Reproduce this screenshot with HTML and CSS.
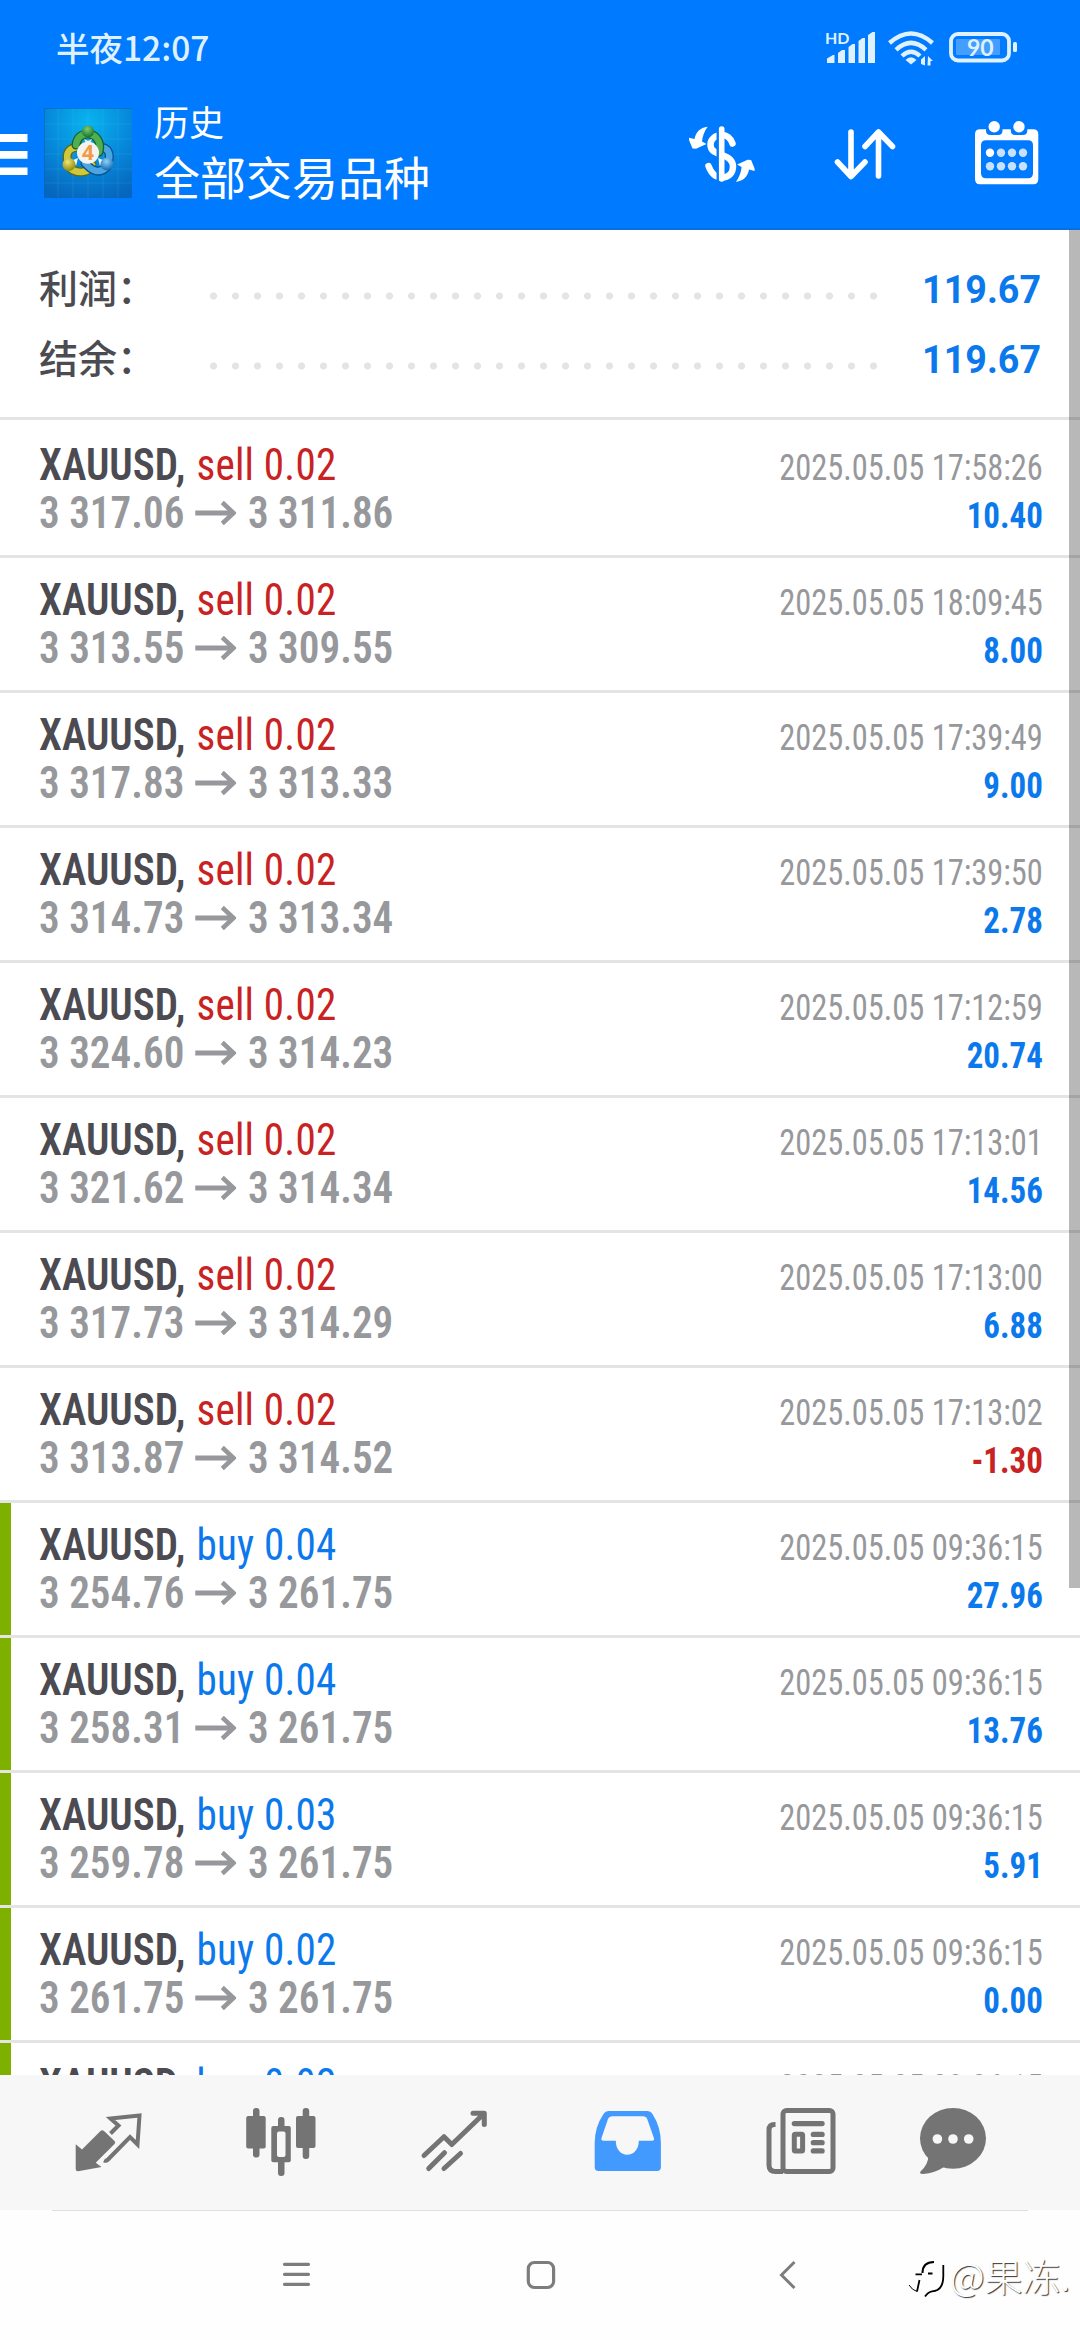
FILE: index.html
```
<!DOCTYPE html>
<html lang="zh-CN"><head><meta charset="utf-8"><title>历史</title><link rel="stylesheet" href="styles.css"></head>
<body>
<header class="header">
  <div class="status">
    <span class="clock">半夜12:07</span>
    <svg class="status-icons" viewBox="820 20 210 56" width="210" height="56">
      <g fill="#dff1ff">
        <text x="825" y="43.500" class="hd">HD</text>
        <path d="M827 63V58.500L833 55H834.500V63ZM838 63V53L842 50H845V63ZM848.500 63V47L852.500 44H855V63ZM858.500 63V41L862.500 38H865V63ZM868 63V35L872.500 32H875V63Z"/>
        <path d="M905.500 60Q911 54.500 916.500 60L911 64.500Z"/>
        <path d="M921 64V59.500L925 56V65.500ZM928 56L933 61H930.500V65.500H927.500Z"/>
        <rect x="1013" y="42" width="4" height="10" rx="1.500"/>
        <rect x="956" y="39" width="44" height="16" rx="1" opacity=".3"/>
        <text x="967" y="56" class="batt">90</text>
      </g>
      <g fill="none" stroke="#dff1ff" stroke-width="4.400">
        <path d="M889.500 43Q911 24 932.500 43"/>
        <path d="M896 49.800Q911 36 926 49.800"/>
        <path d="M902 56Q911 47.500 920 56"/>
        <rect x="951" y="34" width="58" height="26.500" rx="7" stroke-width="3.800"/>
      </g>
    </svg>
  </div>
  <div class="appbar">
    <svg class="burger" viewBox="0 134 28 42" width="28" height="42"><path fill="#fff" d="M0 134H27.500V142H0ZM0 151H27.500V158.700H0ZM0 167.500H27.500V175H0Z"/></svg>
    <svg class="logo" viewBox="44 108 88 90" width="88" height="90">
      <defs>
        <radialGradient id="bg" cx=".5" cy=".15" r=".9"><stop offset="0" stop-color="#08b4ee"/><stop offset=".5" stop-color="#068bdc"/><stop offset="1" stop-color="#0666bd"/></radialGradient>
        <radialGradient id="gn" cx=".45" cy=".3" r=".7"><stop offset="0" stop-color="#7fce70"/><stop offset="1" stop-color="#14702b"/></radialGradient>
        <radialGradient id="yl" cx=".4" cy=".3" r=".7"><stop offset="0" stop-color="#f0e870"/><stop offset="1" stop-color="#8f8a12"/></radialGradient>
        <radialGradient id="bl" cx=".45" cy=".3" r=".7"><stop offset="0" stop-color="#8fd2f5"/><stop offset="1" stop-color="#1268b4"/></radialGradient>
      </defs>
      <rect x="44" y="108" width="88" height="90" fill="url(#bg)"/>
      <path d="M58 108V198M73 108V198M88 108V198M103 108V198M118 108V198M44 124H132M44 139H132M44 154H132M44 169H132M44 183H132" stroke="#6fd0ff" stroke-opacity=".14" fill="none"/>
      <path d="M44.500 198V108.500H132" fill="none" stroke="#0560b5" stroke-opacity=".6"/>
      <g fill="none" stroke-linecap="round">
        <path d="M68 162C65 152 70 147 80 147M70 168C78 175 90 172 92 165" stroke="#5c6a12" stroke-width="9"/>
        <path d="M68 162C65 152 70 147 80 147M70 168C78 175 90 172 92 165" stroke="#cfc83c" stroke-width="6.500"/>
        <path d="M99 147C109 147 111 155 108 163M107 167C99 175 91 170 85 163" stroke="#084f92" stroke-width="9"/>
        <path d="M99 147C109 147 111 155 108 163M107 167C99 175 91 170 85 163" stroke="#4aa6e0" stroke-width="6.500"/>
        <path d="M76 145C77 137 82 134 88 134C95 134 102 141 99 152" stroke="#14602a" stroke-width="9"/>
        <path d="M76 145C77 137 82 134 88 134C95 134 102 141 99 152" stroke="#4fae4f" stroke-width="6.500"/>
      </g>
      <path d="M84 139L88 141L92 139L90 143H86ZM73 160L78 158L76 166ZM103 160L98 158L100 166Z" fill="#f4f8e8"/>
      <circle cx="88" cy="131.500" r="6" fill="url(#gn)"/>
      <circle cx="69" cy="164.500" r="6.500" fill="url(#yl)"/>
      <circle cx="107" cy="164" r="6.500" fill="url(#bl)"/>
      <circle cx="88" cy="152.700" r="11" fill="#f4f3f0"/>
      <text x="88" y="160" class="four">4</text>
    </svg>
    <div class="titles"><div class="title-small">历史</div><div class="title-big">全部交易品种</div></div>
    <svg class="actions" viewBox="680 110 370 85" width="370" height="85">
      <g fill="none" stroke="#fff" stroke-linecap="round" stroke-linejoin="round">
        <path d="M732.500 142.500C730 136 727 134 722 134C715 134 710.500 138.500 710.500 143.500C710.500 149.500 714 151 722 154C729.500 156.500 733 160 733 165.500C733 172 728.500 176.500 722 176.500C714.500 176.500 711 172 708.500 165" stroke-width="6.500"/>
        <path d="M717.800 128V180" stroke="#007aff" stroke-width="2.500" stroke-linecap="butt"/>
        <path d="M721.700 128V178" stroke-width="5.600"/>
        <path d="M851 131V175M837.500 161L851 175.500L865 161M878.500 175V131M865 145.500L878.500 131L892.500 145.500" stroke-width="5.600"/>
      </g>
      <g fill="#fff">
        <path id="sw" d="M707.700 125.700C700 126.500 696 131 694.500 138L689 136.700V139L692.500 147.500L696 147.800L706.500 143L702 140.500C702.500 135 704.500 130 707.700 125.700Z"/>
        <use href="#sw" transform="rotate(180 721.800 153.300)"/>
        <path fill-rule="evenodd" d="M980 128.300H1033.300Q1038.300 128.300 1038.300 133.300V178.300Q1038.300 183.300 1033.300 183.300H980Q975 183.300 975 178.300V133.300Q975 128.300 980 128.300ZM986 139.300Q981 139.300 981 144.300V172.300Q981 177.300 986 177.300H1028Q1033 177.300 1033 172.300V144.300Q1033 139.300 1028 139.300Z"/>
        <path fill="#007aff" d="M986 127H1002.500V129.500Q1002.500 134 998 134H990.500Q986 134 986 129.500ZM1010.800 127H1027.300V129.500Q1027.300 134 1022.800 134H1015.300Q1010.800 134 1010.800 129.500Z"/>
        <circle cx="994.200" cy="125.700" r="5.700"/><circle cx="1019" cy="125.700" r="5.700"/>
        <circle cx="990" cy="151.700" r="4.200"/>
        <g opacity=".78"><circle cx="1001" cy="151.700" r="4.200"/><circle cx="1012" cy="151.700" r="4.200"/><circle cx="1023" cy="151.700" r="4.200"/><circle cx="990" cy="165.300" r="4.200"/><circle cx="1001" cy="165.300" r="4.200"/><circle cx="1012" cy="165.300" r="4.200"/><circle cx="1023" cy="165.300" r="4.200"/></g>
      </g>
    </svg>
  </div>
</header>
<main class="content">
  <section class="summary">
    <div class="sum-row"><span class="sum-label">利润：</span><span class="dots"></span><span class="sum-value">119.67</span></div>
    <div class="sum-row"><span class="sum-label">结余：</span><span class="dots"></span><span class="sum-value">119.67</span></div>
  </section>
  <section class="deals" id="deals"></section>
  <div class="scrollbar"></div>
</main>
<nav class="tabs">
  <svg viewBox="0 2075 195 135" width="195" height="135"><path fill="#747474" d="M75.700 2144.300L82 2149.500L100.500 2131Q102.300 2129.500 104 2131L114.500 2141Q116 2142.700 114.500 2144L95.700 2162.700L101.500 2167L78 2171.300Q75.700 2171.300 75.700 2169Z"/><path fill="none" stroke="#747474" stroke-width="4" d="M110.500 2133.500L118.500 2125.500L110.500 2118.500L139.500 2115.500L137.500 2144.500L130 2137L108 2159.500Q106 2161.500 104 2160.500"/></svg>
  <svg viewBox="195 2075 172 135" width="172" height="135"><g fill="#747474"><rect x="246.200" y="2116" width="19.500" height="32.500" rx="2"/><rect x="253" y="2108" width="6.500" height="49.500" rx="3"/><rect x="296" y="2116" width="19.500" height="32" rx="2"/><rect x="302.700" y="2108" width="6.500" height="51" rx="3"/><rect x="278" y="2117" width="6.500" height="59" rx="3"/><rect x="271.300" y="2126" width="19.500" height="36.300" rx="2"/></g><rect x="277" y="2131.500" width="8.500" height="25.500" rx="2" fill="#f7f7f7"/></svg>
  <svg viewBox="367 2075 174 135" width="174" height="135"><path fill="none" stroke="#747474" stroke-width="5" stroke-linecap="round" stroke-linejoin="round" d="M424 2155.500L444 2136.700L451.800 2144.500L483.500 2114M473 2113.300H484.300V2124.500M428.700 2168.500L444.500 2152.700M444 2168.500L460.500 2153.500"/></svg>
  <svg viewBox="541 2075 173 135" width="173" height="135"><path fill="#429aff" fill-rule="evenodd" d="M609 2111H647Q650.500 2111 652.500 2114Q660.900 2127 660.900 2143V2167Q660.900 2171 657 2171H598.500Q594.700 2171 594.700 2167V2143Q594.700 2127 603.500 2114Q605.500 2111 609 2111ZM612 2116.300Q609 2116.300 608 2119L601.500 2138Q600.700 2140.700 603.500 2140.700H615.800C615.800 2149.500 621 2154.700 627.300 2154.700C633.500 2154.700 638.800 2149.500 638.800 2140.700H652Q654.700 2140.700 653.900 2138L647.200 2119Q646.200 2116.300 643 2116.300Z"/></svg>
  <svg viewBox="714 2075 163 135" width="163" height="135"><g fill="none" stroke="#747474" stroke-width="5"><rect x="783" y="2110.500" width="50" height="61" rx="3.500"/><path d="M775.500 2124.500H774.500Q769 2124.500 769 2130V2165Q769 2171.500 775.500 2171.500H783"/><rect x="794.300" y="2134.300" width="8.300" height="16.800" rx="1"/></g><g fill="#747474"><rect x="791.700" y="2121" width="33" height="5.200" rx="2.600"/><rect x="810.700" y="2131.700" width="14" height="5.300" rx="2.600"/><rect x="810.700" y="2140" width="14" height="5.300" rx="2.600"/><rect x="810.700" y="2148.300" width="14" height="5.300" rx="2.600"/></g></svg>
  <svg viewBox="877 2075 203 135" width="203" height="135"><ellipse cx="953" cy="2138.300" rx="33" ry="30.400" fill="#747474"/><path fill="#747474" d="M928.500 2156Q928 2165 920.500 2171.500Q919 2174 923 2174Q935 2173 944 2167Z"/><g fill="#f7f7f7"><circle cx="937.400" cy="2139" r="4.800"/><circle cx="953" cy="2139" r="4.800"/><circle cx="968.700" cy="2139" r="4.800"/></g></svg>
</nav>
<footer class="sysnav">
  <svg class="sys-icons" viewBox="270 2250 540 50" width="540" height="50"><g fill="none" stroke="#7d7d7d" stroke-width="3.200" stroke-linecap="round"><path d="M284.500 2264.300H308.500M284.500 2274.300H308.500M284.500 2284.300H308.500"/><rect x="528.300" y="2262.500" width="25.300" height="25" rx="6"/><path stroke-linecap="butt" stroke-width="3" d="M794.500 2262L781.500 2275L794.500 2288"/></g></svg>
  <div class="watermark">
    <svg viewBox="906 2262 42 44" width="42" height="44"><g fill="none" stroke="#000"><path stroke-width="2" d="M922.500 2279C922.500 2271 927 2268 934 2268"/><path stroke-width="1.800" d="M915.500 2280.300H922M928 2279.500H932.500M919.500 2286L917 2297.500"/><path stroke-width="1" d="M909 2291Q912 2296 917 2297.500"/><path stroke-width="1.800" d="M943.300 2271V2282C943.300 2291 940 2297 932 2297.300Q928 2298 925 2302.500"/></g></svg>
    <span>@果冻.</span>
  </div>
</footer>
<script src="app.js"></script>
</body></html>
```
FILE: app.js
```
const deals = [
  ['sell', '0.02', '3 317.06', '3 311.86', '17:58:26', '10.40'],
  ['sell', '0.02', '3 313.55', '3 309.55', '18:09:45', '8.00'],
  ['sell', '0.02', '3 317.83', '3 313.33', '17:39:49', '9.00'],
  ['sell', '0.02', '3 314.73', '3 313.34', '17:39:50', '2.78'],
  ['sell', '0.02', '3 324.60', '3 314.23', '17:12:59', '20.74'],
  ['sell', '0.02', '3 321.62', '3 314.34', '17:13:01', '14.56'],
  ['sell', '0.02', '3 317.73', '3 314.29', '17:13:00', '6.88'],
  ['sell', '0.02', '3 313.87', '3 314.52', '17:13:02', '-1.30'],
  ['buy', '0.04', '3 254.76', '3 261.75', '09:36:15', '27.96'],
  ['buy', '0.04', '3 258.31', '3 261.75', '09:36:15', '13.76'],
  ['buy', '0.03', '3 259.78', '3 261.75', '09:36:15', '5.91'],
  ['buy', '0.02', '3 261.75', '3 261.75', '09:36:15', '0.00'],
  ['buy', '0.02', '3 261.75', '3 261.75', '09:36:15', '0.00']
];
const arrow = '<svg class="arrow" viewBox="0 0 44 24" width="44" height="24"><path d="M0 12H40M29 1.500L41 12L29 22.500" fill="none" stroke="#97989b" stroke-width="4.800"/></svg>';
document.getElementById('deals').innerHTML = deals.map(([side, lot, from, to, time, profit]) => `
  <article class="deal deal-${side}">
    <div class="name"><b>XAUUSD,</b><span class="side">${side} ${lot}</span></div>
    <div class="time">2025.05.05 ${time}</div>
    <div class="price"><span>${from}</span>${arrow}<span>${to}</span></div>
    <div class="profit${profit[0] === '-' ? ' loss' : ''}">${profit}</div>
  </article>`).join('');
```
FILE: styles.css
```
* { box-sizing: border-box; }
body { margin: 0; width: 1080px; height: 2340px; display: flex; flex-direction: column; overflow: hidden; background: #fefefe; font-family: "Roboto Condensed", Roboto, "Noto Sans CJK SC", sans-serif; }
svg { display: block; flex: none; }
.header { height: 230px; background: #007aff; border-bottom: 2px solid #0870e0; color: #fff; flex: none; }
.status { height: 93px; padding: 20px 50px 0 56px; display: flex; justify-content: space-between; color: #dff1ff; }
.clock { font: 500 33.500px/53px "Noto Sans CJK SC", sans-serif; }
.hd { font: 700 16px Lato, sans-serif; }
.batt { font: 700 23px Lato, sans-serif; }
.appbar { display: flex; align-items: center; height: 120px; }
.burger { margin-top: 4px; }
.logo { margin-left: 16px; }
.four { font: 700 21px "Open Sans", sans-serif; fill: #f29a45; text-anchor: middle; }
.titles { margin-left: 22px; flex: 1; font-family: "Noto Sans CJK SC", sans-serif; font-weight: 400; }
.title-small { font-size: 35px; line-height: 50px; }
.title-big { font-size: 46px; line-height: 58px; padding-bottom: 7px; }
.actions { margin-right: 30px; }
.content { flex: none; height: 1845px; overflow: hidden; position: relative; background: #fff; }
.summary { height: 190px; border-bottom: 3px solid #e4e4e4; padding: 24px 39px 0; }
.sum-row { height: 70px; display: flex; align-items: center; }
.sum-label { width: 171px; padding-bottom: 5px; font: 500 39px/65px "Noto Sans CJK SC", sans-serif; color: #4b4b51; }
.dots { width: 682px; height: 8px; margin-top: 14px; background: radial-gradient(circle at 3.500px 4px, #e4e4e4 3.200px, transparent 3.900px) 0 0 / 22px 8px repeat-x; }
.sum-value { flex: 1; text-align: right; font: 700 39px/70px Roboto, sans-serif; color: #0b79ec; padding-top: 1px; transform: scaleX(.965); transform-origin: right; }
.deal { height: 135px; border-bottom: 3px solid #e4e4e4; padding: 18px 37px 0 39px; display: grid; grid-template: 48px 48px / 1fr auto; align-items: baseline; background: #fff; }
.deal:first-child { height: 138px; padding-top: 21px; }
.deal-buy { background: linear-gradient(90deg, #7eb000 11px, #fff 11px); background-clip: padding-box; }
.name, .price { font-size: 44px; line-height: 48px; white-space: nowrap; transform: scaleX(.935); transform-origin: left; }
.name b { font-weight: 650; color: #4b4b51; margin-right: 12px; }
.side { color: #c92222; font-weight: 430; letter-spacing: .2px; }
.deal-buy .side { color: #0b79ec; }
.price { font-weight: 650; color: #97989b; display: flex; align-items: baseline; gap: 12px; }
.arrow { align-self: center; }
.time { font-size: 36px; line-height: 48px; color: #97989b; transform: scaleX(.9); transform-origin: right; }
.profit { font-size: 36px; line-height: 48px; font-weight: 700; text-align: right; color: #0b79ec; transform: scaleX(.915); transform-origin: right; }
.profit.loss { color: #c92222; }
.scrollbar { position: absolute; top: 0; right: 0; width: 11px; height: 1358px; background: rgba(0, 0, 0, .28); }
.tabs { flex: none; height: 135px; display: flex; background: #f7f7f7; }
.sysnav { flex: 1; position: relative; display: flex; justify-content: center; padding-top: 40px; }
.sysnav::before { content: ""; position: absolute; left: 52px; right: 52px; top: 0; height: 1px; background: #e0e0e0; }
.watermark { position: absolute; left: 906px; top: 46px; display: flex; align-items: center; gap: 2px; font: 300 38px/46px "Noto Sans CJK SC", sans-serif; color: #fff; text-shadow: 1px 1px 1px #333; }
.watermark span { margin-top: -6px; }
```
